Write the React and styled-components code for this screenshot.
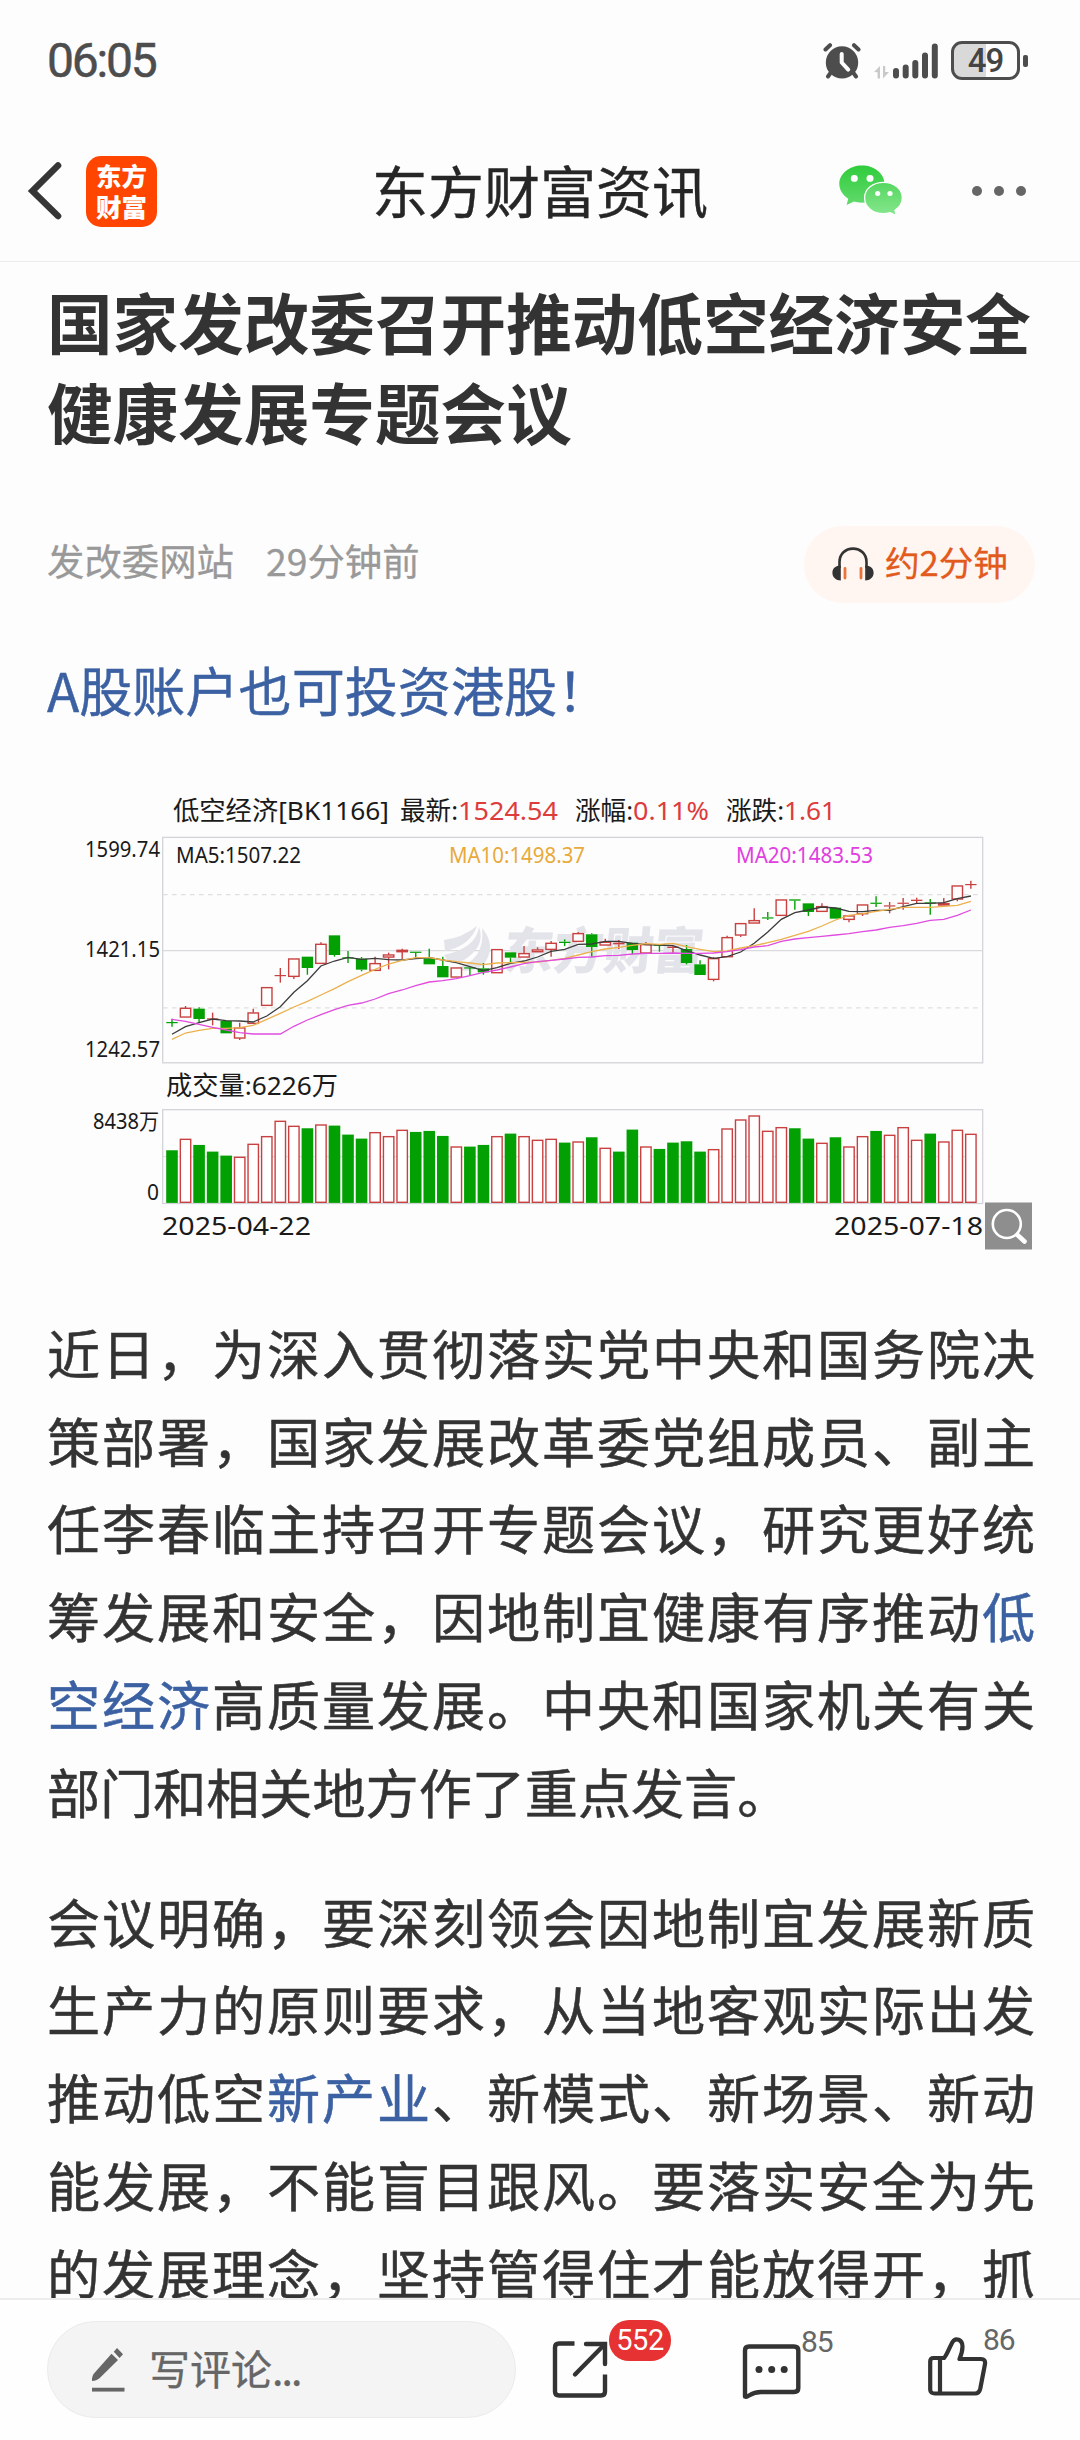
import React from "react";
import styled, { createGlobalStyle } from "styled-components";

const CJK = `"Noto Sans CJK SC", "Noto Sans", sans-serif`;
const CHART_FONT = `"Noto Sans", "Noto Sans CJK SC", sans-serif`;

const GlobalStyle = createGlobalStyle`
  * { box-sizing: border-box; }
  body { margin: 0; background: #fdfdfd; }
`;

const Screen = styled.div`
  width: 1080px;
  height: 2440px;
  display: flex;
  flex-direction: column;
  overflow: hidden;
  background: #fdfdfd;
  color: #333;
  font-family: ${CJK};
`;

const StatusBar = styled.div`
  flex: none;
  height: 121px;
  padding: 0 52px 0 47px;
  display: flex;
  align-items: center;
  justify-content: space-between;
`;

const Clock = styled.span`
  font: 400 48px/60px Roboto, sans-serif;
  letter-spacing: -2.2px;
  color: #4d4d4d;
  -webkit-text-stroke: 0.5px #4d4d4d;
`;

const StatusIcons = styled.div`
  display: flex;
  align-items: center;
`;

const SignalSlot = styled.div`
  display: flex;
  margin-left: 12px;
`;

const Battery = styled.div`
  width: 69px;
  height: 39px;
  margin-left: 12px;
  border: 3px solid #4d4d4d;
  border-radius: 11px;
  background: linear-gradient(90deg, #d9d9d9 50%, #fdfdfd 50%);
  display: flex;
  align-items: center;
  justify-content: center;
  font: 500 33px/33px Roboto, sans-serif;
  letter-spacing: -1px;
  color: #444;
`;

const BatteryTip = styled.div`
  width: 5px;
  height: 12px;
  margin-left: 3px;
  border-radius: 2px;
  background: #4d4d4d;
`;

const NavBar = styled.header`
  flex: none;
  height: 141px;
  padding: 0 53px 0 27px;
  border-bottom: 1.5px solid #ececec;
  display: grid;
  grid-template-columns: 1fr auto 1fr;
  align-items: center;
`;

const NavSide = styled.div`
  display: flex;
  align-items: center;
  justify-content: ${(p) => (p.$end ? "flex-end" : "flex-start")};
  gap: ${(p) => p.$gap}px;
`;

const NavTitle = styled.h1`
  margin: -5px 0 0 26px;
  font-weight: 400;
  font-size: 56px;
  line-height: 80px;
  color: #262626;
  -webkit-text-stroke: 0.4px #262626;
`;

const AppLogo = styled.div`
  width: 71px;
  height: 71px;
  border-radius: 15px;
  background: #ff4500;
  color: #fff;
  display: flex;
  flex-direction: column;
  align-items: center;
  justify-content: center;
  font-weight: 900;
  font-size: 25.5px;
  line-height: 31px;
  padding-bottom: 3px;
`;

const MoreDots = styled.div`
  display: flex;
  gap: 12px;
  padding-right: 1px;
`;

const Dot = styled.i`
  width: 10px;
  height: 10px;
  border-radius: 50%;
  background: #666;
`;

const Article = styled.main`
  flex: 1;
  min-height: 0;
  overflow: hidden;
  padding: 14px 45px 0 47px;
`;

const Headline = styled.h2`
  margin: 0;
  font-weight: 700;
  font-size: 65.6px;
  line-height: 90.4px;
  color: #333;
`;

const MetaRow = styled.div`
  margin-top: 69px;
  height: 77px;
  display: flex;
  align-items: center;
  gap: 32px;
  font-size: 37.4px;
  line-height: 50px;
  color: #999;
  -webkit-text-stroke: 0.3px;
`;

const MetaText = styled.span`
  margin-top: -9px;
`;

const ListenPill = styled.div`
  margin-left: auto;
  width: 231px;
  height: 77px;
  padding-left: 28px;
  border-radius: 39px;
  background: #fff5f1;
  color: #e25a1c;
  display: flex;
  align-items: center;
  gap: 11px;
  font-size: 34.6px;
`;

const PillText = styled.span`
  margin-top: -6px;
`;

const PromoLink = styled.a`
  display: block;
  margin-top: 49px;
  font-size: 53.1px;
  line-height: 74px;
  color: #3c61a3;
  -webkit-text-stroke: 0.4px;
`;

const ChartBox = styled.figure`
  margin: 54px 0 52px -2px;
  height: 476px;
`;

const Paragraph = styled.p`
  margin: 0 0 42px;
  font-size: 53.1px;
  line-height: 87.8px;
  text-align: justify;
  text-align-last: ${(p) => (p.$cut ? "justify" : "auto")};
  -webkit-text-stroke: 0.5px;
`;

const Term = styled.a`
  color: #3c61a3;
`;

const BottomBar = styled.footer`
  flex: none;
  height: 142px;
  border-top: 2px solid #ececec;
  background: #fefefe;
  padding: 21px 0 0 47px;
  display: flex;
  align-items: flex-start;
`;

const CommentInput = styled.div`
  width: 469px;
  height: 97px;
  border: 1px solid #ebebeb;
  border-radius: 49px;
  background: #f4f4f4;
  color: #666;
  display: flex;
  align-items: center;
  gap: 24px;
  padding-left: 43px;
  font-size: 41px;
  line-height: 60px;
  -webkit-text-stroke: 0.3px;
`;

const InputHint = styled.span`
  margin-top: -6px;
`;

const Ellipsis = styled.span`
  letter-spacing: -1.9px;
`;

const Action = styled.div`
  position: relative;
  width: 62px;
  height: 62px;
  margin: ${(p) => p.$top || 17}px 0 0 ${(p) => p.$gap}px;
`;

const Count = styled.span`
  position: absolute;
  left: ${(p) => p.$left || 60}px;
  top: -14px;
  font: 400 30px/36px Roboto, sans-serif;
  letter-spacing: -1px;
  color: #666;
`;

const Badge = styled.span`
  position: absolute;
  left: 58px;
  top: -18px;
  width: 62px;
  height: 41px;
  border-radius: 20px;
  background: #e63232;
  color: #fff;
  text-align: center;
  font: 400 29px/41px Roboto, sans-serif;
  letter-spacing: -0.5px;
`;

/* kind, body top, body bottom, high, low, volume bar top, volume kind when it differs */
const DAYS = [
  ["g", 726, 729, 716, 740, 272], ["r", 684, 712, 678, 712, 238], ["g", 686, 717, 682, 727, 256],
  ["r", 715, 717, 698, 736, 276, "g"], ["g", 723, 760, 723, 760, 288], ["r", 743, 775, 728, 780, 292],
  ["r", 698, 731, 686, 731, 253], ["r", 622, 677, 622, 677, 230], ["r", 585, 588, 564, 608, 184],
  ["r", 536, 590, 536, 597, 199], ["g", 530, 564, 530, 584, 206], ["r", 492, 551, 487, 551, 195],
  ["g", 466, 525, 466, 530, 198], ["g", 532, 534, 513, 549, 225], ["g", 536, 569, 531, 574, 237],
  ["r", 550, 572, 530, 572, 218], ["r", 524, 532, 518, 568, 230], ["r", 510, 516, 506, 537, 211],
  ["g", 515, 518, 515, 537, 217], ["g", 535, 553, 506, 553, 214], ["g", 558, 592, 530, 592, 229],
  ["r", 563, 592, 563, 592, 261], ["g", 562, 564, 562, 587, 261], ["g", 565, 577, 549, 584, 256],
  ["r", 508, 579, 508, 579, 230], ["g", 517, 533, 517, 550, 222], ["r", 520, 532, 498, 532, 230],
  ["r", 509, 516, 502, 516, 241], ["r", 489, 509, 483, 530, 238], ["g", 485, 489, 478, 498, 249],
  ["r", 460, 485, 456, 485, 246], ["g", 463, 501, 460, 530, 233], ["r", 486, 496, 476, 496, 265],
  ["r", 488, 493, 480, 507, 276, "g"], ["g", 488, 510, 488, 523, 210], ["r", 493, 520, 486, 520, 261],
  ["g", 493, 497, 493, 515, 268], ["r", 500, 504, 496, 518, 249, "g"], ["g", 507, 549, 495, 553, 245],
  ["g", 553, 585, 541, 585, 276], ["r", 535, 599, 531, 604, 269], ["r", 472, 531, 467, 531, 207],
  ["r", 430, 466, 430, 471, 180], ["r", 421, 430, 385, 430, 168], ["g", 412, 415, 396, 420, 214, "r"],
  ["r", 359, 407, 359, 407, 203], ["g", 358, 362, 358, 389, 206], ["g", 370, 396, 370, 408, 237],
  ["r", 379, 395, 370, 395, 250], ["g", 383, 416, 383, 416, 233], ["r", 407, 419, 407, 427, 261],
  ["r", 374, 402, 374, 408, 230], ["g", 368, 371, 349, 381, 214], ["r", 376, 379, 366, 400, 226],
  ["r", 368, 371, 354, 389, 203], ["r", 359, 363, 353, 372, 241], ["g", 367, 370, 357, 404, 222],
  ["r", 370, 376, 354, 376, 246], ["r", 317, 358, 317, 364, 211], ["r", 312, 315, 302, 326, 223],
];

const MA5 = [763, 740, 728, 717, 722, 723, 726, 708, 680, 637, 602, 558, 543, 532, 538, 535, 539, 540, 536, 533, 540, 548, 560, 572, 563, 550, 543, 531, 514, 508, 493, 492, 484, 484, 490, 494, 495, 497, 512, 525, 535, 530, 516, 490, 456, 418, 398, 390, 381, 384, 394, 395, 391, 391, 380, 370, 370, 368, 356, 348];
const MA10 = [778, 759, 751, 745, 745, 743, 736, 718, 700, 681, 664, 645, 626, 605, 586, 568, 552, 541, 533, 533, 540, 545, 549, 554, 549, 548, 547, 546, 541, 535, 525, 515, 507, 502, 496, 491, 493, 490, 500, 508, 515, 513, 504, 497, 488, 478, 466, 454, 438, 420, 406, 401, 394, 388, 382, 382, 382, 379, 376, 364];
const MA20 = [718, 724, 733, 742, 750, 758, 762, 762, 762, 739, 720, 704, 689, 676, 669, 657, 641, 630, 617, 606, 602, 596, 587, 577, 570, 561, 551, 545, 541, 537, 532, 531, 527, 526, 522, 520, 520, 519, 520, 520, 519, 515, 509, 501, 497, 484, 477, 473, 469, 465, 461, 455, 450, 442, 437, 430, 421, 418, 406, 390];

const RED = "#c94040";
const GREEN = "#03a003";
const dayX = (i) => 172 + i * 13.54;
const priceY = (v) => 780 + v / 3;
const volY = (v) => 1060 + v / 3;
const line = (vals) => vals.map((v, i) => `${dayX(i).toFixed(1)},${priceY(v).toFixed(1)}`).join(" ");

function Candle({ day, i }) {
  const [kind, top, bottom, high, low] = day;
  const x = dayX(i);
  const color = kind === "g" ? GREEN : RED;
  const hollow = kind === "r" && bottom - top > 5;
  return (
    <g stroke={color} strokeWidth="1.4">
      {high < top && <line x1={x} x2={x} y1={priceY(high)} y2={priceY(top)} />}
      {low > bottom && <line x1={x} x2={x} y1={priceY(bottom)} y2={priceY(low)} />}
      {hollow ? (
        <rect x={x - 5.2} y={priceY(top) + 0.3} width="10.4" height={(bottom - top) / 3 - 0.6} fill="#fdfdfd" />
      ) : (
        <rect x={x - 5.7} y={priceY(top)} width="11.4" height={Math.max(1.2, (bottom - top) / 3)} fill={color} stroke="none" />
      )}
    </g>
  );
}

function VolumeBar({ day, i }) {
  const kind = day[6] || day[0];
  const y = volY(day[5]);
  const x = dayX(i);
  return kind === "g" ? (
    <rect x={x - 5.8} y={y - 0.4} width="11.6" height={1203.3 - y} fill={GREEN} />
  ) : (
    <rect x={x - 5.2} y={y} width="10.4" height={1202.3 - y} fill="#fff" stroke={RED} strokeWidth="1.4" />
  );
}

function Label({ x, y, w, size = 26, fill = "#1a1a1a", children }) {
  return (
    <text x={x} y={y} fontSize={size} fill={fill} textLength={w} lengthAdjust="spacingAndGlyphs">
      {children}
    </text>
  );
}

function KLineChart() {
  return (
    <svg width="990" height="476" viewBox="45 780 990 476" fontFamily={CHART_FONT}>
      <Label x={173} y={820} w={216}>低空经济[BK1166]</Label>
      <Label x={400} y={820} w={58}>最新:</Label>
      <Label x={458} y={820} w={100} fill="#dc3c3c">1524.54</Label>
      <Label x={575} y={820} w={58}>涨幅:</Label>
      <Label x={633} y={820} w={76} fill="#dc3c3c">0.11%</Label>
      <Label x={726} y={820} w={58}>涨跌:</Label>
      <Label x={784} y={820} w={52} fill="#dc3c3c">1.61</Label>

      <Label x={85} y={857} w={75} size={21.5}>1599.74</Label>
      <Label x={85} y={957} w={75} size={21.5}>1421.15</Label>
      <Label x={85} y={1057} w={75} size={21.5}>1242.57</Label>

      <rect x="162.7" y="837.4" width="820" height="225.4" fill="none" stroke="#d3d3da" strokeWidth="1.3" />
      <line x1="163" x2="982" y1="950.7" y2="950.7" stroke="#d9d9de" strokeWidth="1.2" />
      <g stroke="#dfdfe2" strokeWidth="1.2" strokeDasharray="4.6 4.4">
        <line x1="163" x2="982" y1="894.7" y2="894.7" />
        <line x1="163" x2="982" y1="1007.8" y2="1007.8" />
      </g>

      <g fill="#e3e3ea">
        <path d="M444 940 Q462 938 477 926 Q470 946 445 951 Z" />
        <path d="M444 955 Q476 948 479 927 Q486 946 464 960 Q454 965 449 962 Z" />
        <path d="M482 928 Q497 946 484 964 Q474 974 452 969 Q486 962 482 928 Z" />
        <text x="0" y="0" fontSize="50" fontWeight="900" textLength="200" lengthAdjust="spacingAndGlyphs" transform="translate(502 969) skewX(-6)">东方财富</text>
      </g>

      <Label x={176} y={863} w={125} size={21.5}>MA5:1507.22</Label>
      <Label x={449} y={863} w={136} size={21.5} fill="#e8aa3c">MA10:1498.37</Label>
      <Label x={736} y={863} w={137} size={21.5} fill="#e040e0">MA20:1483.53</Label>

      {DAYS.map((d, i) => <Candle key={i} day={d} i={i} />)}
      <g fill="none" strokeWidth="1.3">
        <polyline points={line(MA5)} stroke="#3c3c3c" />
        <polyline points={line(MA10)} stroke="#ecb04c" />
        <polyline points={line(MA20)} stroke="#e04ce0" />
      </g>

      <Label x={166} y={1095} w={172}>成交量:6226万</Label>
      <Label x={93} y={1129} w={66} size={21.5}>8438万</Label>
      <Label x={147} y={1200} w={12} size={21.5}>0</Label>
      <rect x="162.7" y="1109.7" width="820" height="93.8" fill="none" stroke="#d3d3da" strokeWidth="1.3" />
      <line x1="163" x2="977" y1="1156.7" y2="1156.7" stroke="#dcdcdc" />
      {DAYS.map((d, i) => <VolumeBar key={i} day={d} i={i} />)}
      <Label x={162} y={1235} w={149}>2025-04-22</Label>
      <Label x={834} y={1235} w={149}>2025-07-18</Label>

      <rect x="985" y="1202.5" width="47" height="47" fill="#8e8e8e" />
      <g fill="none" stroke="#fff">
        <circle cx="1006.8" cy="1224" r="14" strokeWidth="2.6" />
        <path d="M1017.5 1235 L1024.5 1241.5" strokeWidth="4.6" strokeLinecap="round" />
      </g>
    </svg>
  );
}

const AlarmIcon = () => (
  <svg width="38" height="38" viewBox="0 0 38 38" fill="none" strokeLinecap="round">
    <g stroke="#4d4d4d" strokeWidth="4">
      <path d="M2.5 7.5 L7 3.2 M35.5 7.5 L31 3.2 M7.5 31 L5 34.5 M30.5 31 L33 34.5" />
    </g>
    <circle cx="19" cy="20.4" r="16.2" fill="#4d4d4d" />
    <path d="M18.7 12 V20.5 L25.2 27.6" stroke="#fdfdfd" strokeWidth="4" strokeLinejoin="round" />
  </svg>
);

const SignalIcon = () => (
  <svg width="66" height="38" viewBox="0 0 66 38">
    <g fill="#c9c9c9">
      <path d="M1 30 L7 24 V36.5 H4.6 V30.2 Z M10 24 H12.2 V30 H16 L10 36.5 Z" />
    </g>
    <g stroke="#4d4d4d" strokeWidth="6" strokeLinecap="round">
      <path d="M23 29 V33.5 M32.7 25.5 V33.5 M42.3 21 V33.5 M52 13.5 V33.5 M61.8 4.5 V33.5" />
    </g>
  </svg>
);

const BackIcon = () => (
  <svg width="36" height="60" viewBox="0 0 36 60">
    <path d="M31 4.500 L5.500 30 L31 55" fill="none" stroke="#363636" strokeWidth="6.600" strokeLinecap="round" strokeLinejoin="miter" />
  </svg>
);

const WeChatIcon = () => (
  <svg width="64" height="52" viewBox="0 0 64 54" preserveAspectRatio="none">
    <defs>
      <linearGradient id="wechatBack" x1="0" y1="0" x2="0" y2="1">
        <stop offset="0" stopColor="#30cc3c" />
        <stop offset="1" stopColor="#62da6c" />
      </linearGradient>
      <linearGradient id="wechatFront" x1="0" y1="0" x2="0" y2="1">
        <stop offset="0" stopColor="#56d660" />
        <stop offset="1" stopColor="#86e78e" />
      </linearGradient>
    </defs>
    <path d="M23 .5 C10.300 .5 .3 9 .3 19.800 C.3 26 3.800 31.400 9.200 35 L7.600 41.600 L15 37.900 C17.500 38.700 20 39.100 23 39.100 C35.700 39.100 45.500 30.500 45.500 19.800 C45.500 9 35.700 .5 23 .5 Z" fill="url(#wechatBack)" />
    <path d="M44.500 18 C33.800 18 25.600 25 25.600 34.300 C25.600 43.600 33.800 50.500 44.500 50.500 C46.900 50.500 49.200 50.100 51.300 49.400 L57.300 52.500 L56 47 C60.500 44 63.300 39.500 63.300 34.300 C63.300 25 55.200 18 44.500 18 Z" fill="url(#wechatFront)" stroke="#fdfdfd" strokeWidth="1.300" />
    <g fill="#fff">
      <circle cx="15.300" cy="13.900" r="3.500" />
      <circle cx="31" cy="13.900" r="3.500" />
      <circle cx="38.700" cy="29.500" r="2.600" />
      <circle cx="51" cy="29.500" r="2.600" />
    </g>
  </svg>
);

const HeadphoneIcon = () => (
  <svg width="42" height="34" viewBox="0 0 42 34" fill="none">
    <path d="M7.500 21 V15 C7.500 7 13.500 1.600 21 1.600 C28.500 1.600 34.500 7 34.500 15 V21" stroke="#333" strokeWidth="2.600" />
    <path d="M8.800 18.500 C3.500 18.500 .4 21.500 .4 25.800 C.4 30.500 4 33.500 8.800 33.500 Z M33.200 18.500 C38.500 18.500 41.600 21.500 41.600 25.800 C41.600 30.500 38 33.500 33.200 33.500 Z" fill="#333" />
    <path d="M13 21.500 V31 M29 21.500 V31" stroke="#e8743c" strokeWidth="2.800" strokeLinecap="round" />
  </svg>
);

const PencilIcon = () => (
  <svg width="34" height="46" viewBox="0 0 34 48" fill="#666" preserveAspectRatio="none">
    <path d="M20.500 7 L27 13.500 L8.500 32.500 C6.500 34.300 4 35 1 35.500 C.8 32.500 1.300 30 3.200 27.500 Z" />
    <path d="M26 1 L32 7.500 L28.500 11.500 L22.800 5 Z" />
    <rect x="1" y="42.500" width="32.500" height="4" />
  </svg>
);

const ShareIcon = () => (
  <svg width="62" height="62" viewBox="0 0 62 62" fill="none" stroke="#333" strokeWidth="4.400">
    <path d="M23.500 5.500 H8 Q4 5.500 4 9.500 V53.500 Q4 57.500 8 57.500 H50 Q54 57.500 54 53.500 V36.500" />
    <path d="M35 6 H54 V26" strokeLinecap="round" />
    <path d="M53 7 L24 36.500" strokeLinecap="round" />
  </svg>
);

const CommentIcon = () => (
  <svg width="62" height="62" viewBox="0 0 62 62" fill="none" stroke="#333" strokeWidth="4.400">
    <path d="M4 58.500 V12.500 Q4 8.500 8 8.500 H53 Q57.300 8.500 57.300 12.500 V50 Q57.300 54 53 54 H20 Q13.500 54 8 57.500 Q4 60 4 58 Z" strokeLinejoin="round" />
    <g fill="#333" stroke="none">
      <circle cx="18" cy="31.500" r="3.500" />
      <circle cx="30.700" cy="31.500" r="3.500" />
      <circle cx="43.200" cy="31.500" r="3.500" />
    </g>
  </svg>
);

const LikeIcon = () => (
  <svg width="62" height="62" viewBox="0 0 62 62" fill="none" stroke="#333" strokeWidth="4.200" strokeLinejoin="round">
    <path d="M7.500 22 H18 C20.500 20 23 12.500 26.500 6 C29.500 1 36.500 3.500 36.500 10.500 C36.500 15.500 35 19.500 33.500 23 H55 Q59.800 23 59 28 L54.300 52.500 Q53.200 57.500 49 57.500 H9 Q4.200 57.500 4.200 53.500 V25.500 Q4.200 22 7.500 22 Z" />
    <path d="M14 22 V57" />
  </svg>
);

export default function App() {
  return (
    <Screen>
      <GlobalStyle />
      <StatusBar>
        <Clock>06:05</Clock>
        <StatusIcons>
          <AlarmIcon />
          <SignalSlot><SignalIcon /></SignalSlot>
          <Battery>49</Battery>
          <BatteryTip />
        </StatusIcons>
      </StatusBar>

      <NavBar>
        <NavSide $gap={23}>
          <BackIcon />
          <AppLogo>
            <span>东方</span>
            <span>财富</span>
          </AppLogo>
        </NavSide>
        <NavTitle>东方财富资讯</NavTitle>
        <NavSide $end $gap={69}>
          <WeChatIcon />
          <MoreDots><Dot /><Dot /><Dot /></MoreDots>
        </NavSide>
      </NavBar>

      <Article>
        <Headline>国家发改委召开推动低空经济安全健康发展专题会议</Headline>
        <MetaRow>
          <MetaText>发改委网站</MetaText>
          <MetaText>29分钟前</MetaText>
          <ListenPill>
            <HeadphoneIcon />
            <PillText>约2分钟</PillText>
          </ListenPill>
        </MetaRow>
        <PromoLink>A股账户也可投资港股！</PromoLink>
        <ChartBox><KLineChart /></ChartBox>
        <Paragraph>
          近日，为深入贯彻落实党中央和国务院决策部署，国家发展改革委党组成员、副主任李春临主持召开专题会议，研究更好统筹发展和安全，因地制宜健康有序推动<Term>低空经济</Term>高质量发展。中央和国家机关有关部门和相关地方作了重点发言。
        </Paragraph>
        <Paragraph $cut>
          会议明确，要深刻领会因地制宜发展新质生产力的原则要求，从当地客观实际出发推动低空<Term>新产业</Term>、新模式、新场景、新动能发展，不能盲目跟风。要落实安全为先的发展理念，坚持管得住才能放得开，抓
        </Paragraph>
      </Article>

      <BottomBar>
        <CommentInput>
          <PencilIcon />
          <InputHint>写评论<Ellipsis>...</Ellipsis></InputHint>
        </CommentInput>
        <Action $gap={35}><ShareIcon /><Badge>552</Badge></Action>
        <Action $gap={128}><CommentIcon /><Count>85</Count></Action>
        <Action $gap={123} $top={15}><LikeIcon /><Count $left={57}>86</Count></Action>
      </BottomBar>
    </Screen>
  );
}
